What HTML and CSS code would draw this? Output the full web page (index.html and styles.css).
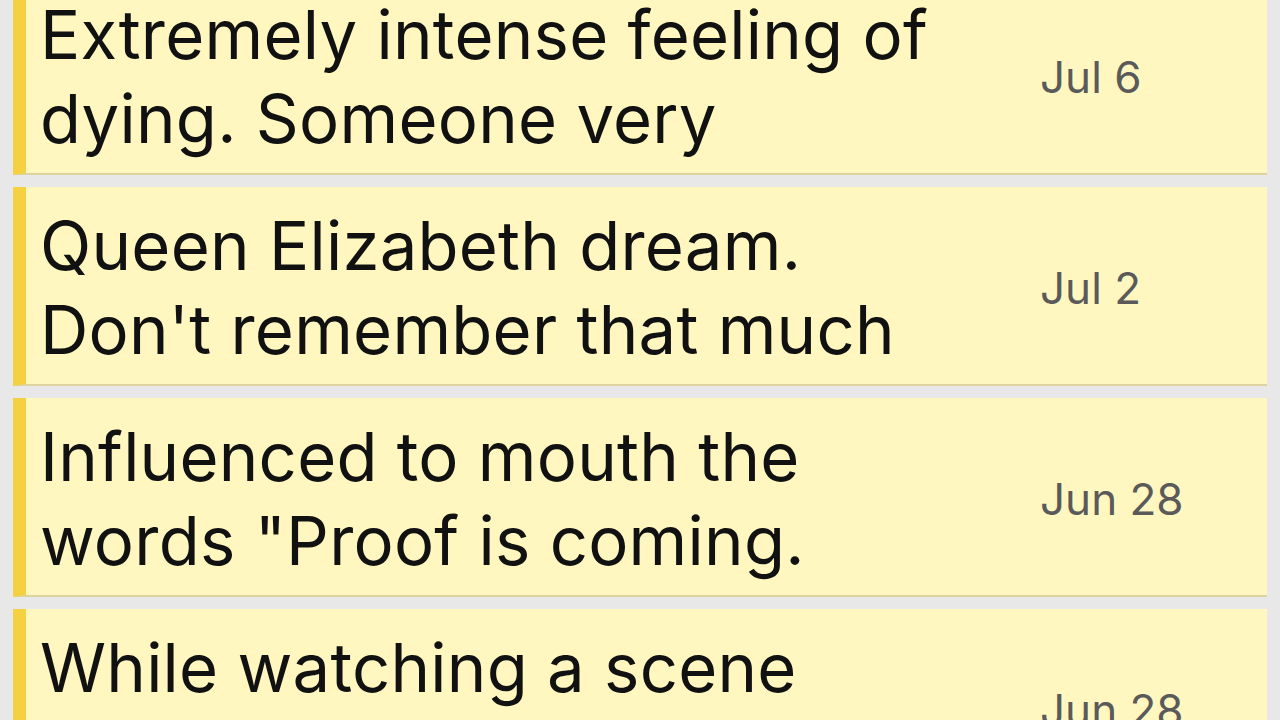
FILE: index.html
```html
<!DOCTYPE html>
<html>
<head>
<meta charset="utf-8">
<link rel="stylesheet" href="styles.css">
</head>
<body>
<main class="list">
  <article class="card">
    <p class="note"><span class="line">Extremely intense feeling of</span><span class="line">dying. Someone very</span></p>
    <time class="date">Jul 6</time>
  </article>
  <article class="card">
    <p class="note"><span class="line">Queen Elizabeth dream.</span><span class="line">Don't remember that much</span></p>
    <time class="date">Jul 2</time>
  </article>
  <article class="card">
    <p class="note"><span class="line">Influenced to mouth the</span><span class="line">words "Proof is coming.</span></p>
    <time class="date">Jun 28</time>
  </article>
  <article class="card">
    <p class="note"><span class="line">While watching a scene</span><span class="line">in a movie, I suddenly</span></p>
    <time class="date">Jun 28</time>
  </article>
</main>
</body>
</html>
```
FILE: styles.css
```css
html, body {
  margin: 0;
  padding: 0;
  background: #e8e8e8;
  overflow: hidden;
}
body {
  font-family: "Inter", "Noto Sans", sans-serif;
  color: #111111;
}
.list {
  display: flex;
  flex-direction: column;
  gap: 12px;
  margin: -24px 13px 0 13px;
}
.card {
  display: grid;
  grid-template-columns: 1fr 227px;
  align-items: center;
  box-sizing: border-box;
  height: 199px;
  background: #fff7bf;
  border-left: 13px solid #f5d142;
  border-bottom: 2px solid #dcd39f;
  padding: 17px 0 12px 14px;
}
.note {
  margin: 0;
  font-size: 67px;
  line-height: 84px;
  letter-spacing: 0.25px;
  overflow: hidden;
}
.line {
  display: block;
  white-space: nowrap;
}
.date {
  font-size: 44px;
  color: #5a5a5a;
  line-height: 1;
}
```
